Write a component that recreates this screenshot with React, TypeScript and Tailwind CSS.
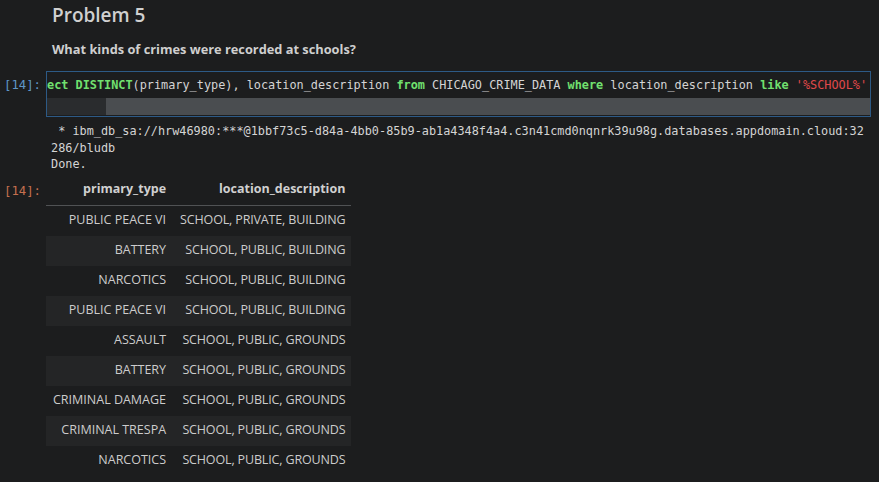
import React from "react";

const rows: [string, string][] = [
  ["PUBLIC PEACE VI", "SCHOOL, PRIVATE, BUILDING"],
  ["BATTERY", "SCHOOL, PUBLIC, BUILDING"],
  ["NARCOTICS", "SCHOOL, PUBLIC, BUILDING"],
  ["PUBLIC PEACE VI", "SCHOOL, PUBLIC, BUILDING"],
  ["ASSAULT", "SCHOOL, PUBLIC, GROUNDS"],
  ["BATTERY", "SCHOOL, PUBLIC, GROUNDS"],
  ["CRIMINAL DAMAGE", "SCHOOL, PUBLIC, GROUNDS"],
  ["CRIMINAL TRESPA", "SCHOOL, PUBLIC, GROUNDS"],
  ["NARCOTICS", "SCHOOL, PUBLIC, GROUNDS"],
];

const ui = { fontFamily: '"Open Sans", "Noto Sans", sans-serif' };
const mono = { fontFamily: '"DejaVu Sans Mono", "Liberation Mono", monospace' };

export default function App() {
  return (
    <div className="w-[879px] h-[482px] overflow-hidden bg-[#1c1d1e] text-[#cccccc]" style={ui}>
      {/* markdown */}
      <div className="pl-[52px] pt-[2px]">
        <div className="text-[19px] font-semibold leading-[26px] text-[#d0d0d0]">Problem 5</div>
        <div className="mt-[12px] text-[12.8px] font-bold leading-[18px] text-[#cfcfcf]">
          What kinds of crimes were recorded at schools?
        </div>
      </div>

      {/* code cell */}
      <div className="mt-[13px] flex">
        <div className="w-[46px] shrink-0 pl-[4px] pt-[5px] text-[12.3px] leading-[18px] text-[#5f96c8]" style={mono}>
          [14]:
        </div>
        <div className="w-[825px] h-[46px] border border-[#2d5a86] bg-[#1c1d1e] flex flex-col">
          <div className="h-[26px] pt-[4px] whitespace-nowrap overflow-hidden text-[11.85px] leading-[18px] text-[#d4d4d4]" style={mono}>
            <span className="font-bold text-[#71e06f]">ect DISTINCT</span>(primary_type), location_description{" "}
            <span className="font-bold text-[#71e06f]">from</span> CHICAGO_CRIME_DATA{" "}
            <span className="font-bold text-[#71e06f]">where</span> location_description{" "}
            <span className="font-bold text-[#71e06f]">like</span>{" "}
            <span className="text-[#e0494a]">'%SCHOOL%'</span>
          </div>
          <div className="h-[17px] flex bg-[#2a2c2e]">
            <div className="w-[59px]" />
            <div className="flex-1 bg-[#4a4d50]" />
          </div>
        </div>
      </div>

      {/* output text */}
      <div className="pl-[51px] pt-[6px] text-[11.85px] leading-[16.5px] text-[#d4d4d4] whitespace-pre" style={mono}>
        <div> * ibm_db_sa://hrw46980:***@1bbf73c5-d84a-4bb0-85b9-ab1a4348f4a4.c3n41cmd0nqnrk39u98g.databases.appdomain.cloud:32</div>
        <div>286/bludb</div>
        <div>Done.</div>
      </div>

      {/* result table */}
      <div className="flex mt-[4px]">
        <div className="w-[46px] shrink-0 pl-[4px] pt-[5px] text-[12.3px] leading-[18px] text-[#c4704f]" style={mono}>
          [14]:
        </div>
        <table className="border-collapse text-[12.5px]">
          <thead>
            <tr className="border-b border-[#505254]">
              <th className="h-[29px] pl-[7px] pr-[7px] pb-[3px] text-right font-bold text-[#d0d0d0]">primary_type</th>
              <th className="h-[29px] pl-[7px] pr-[6px] pb-[3px] text-right font-bold text-[#d0d0d0]">location_description</th>
            </tr>
          </thead>
          <tbody>
            {rows.map(([a, b], i) => (
              <tr key={i} className={i % 2 === 1 ? "bg-[#242526]" : ""}>
                <td className="h-[30px] pl-[7px] pr-[7px] text-right whitespace-nowrap">{a}</td>
                <td className="h-[30px] pl-[7px] pr-[6px] text-right whitespace-nowrap tracking-[-0.15px]">{b}</td>
              </tr>
            ))}
          </tbody>
        </table>
      </div>
    </div>
  );
}
